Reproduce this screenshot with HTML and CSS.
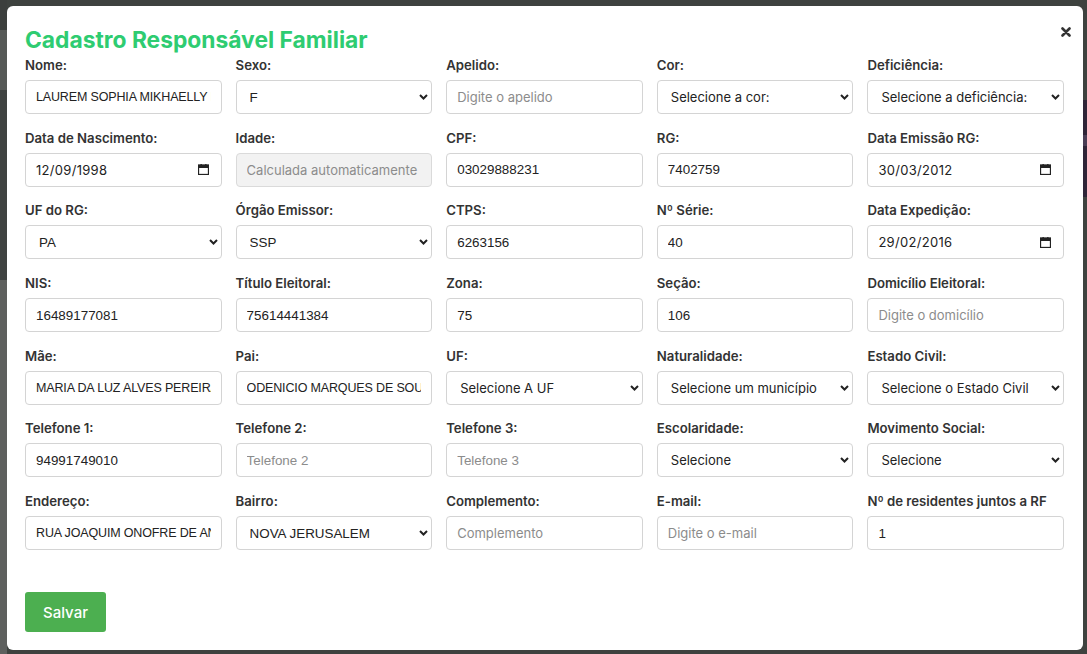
FILE: index.html
```html
<!DOCTYPE html>
<html lang="pt-BR">
<head>
<meta charset="utf-8">
<title>Cadastro Responsável Familiar</title>
<link rel="stylesheet" href="styles.css">
</head>
<body>
<div class="backdrop">
  <div class="modal">
    <div class="modal-header">
      <h2 class="title">Cadastro Responsável Familiar</h2>
      <button class="close" type="button" aria-label="Fechar">
        <svg width="10" height="10" viewBox="0 0 10 10"><path d="M1.5 1.5 L8.5 8.5 M8.5 1.5 L1.5 8.5" stroke="#333" stroke-width="2.6" stroke-linecap="round"/></svg>
      </button>
    </div>
    <form class="form-grid">
      <div class="field"><label>Nome:</label><input class="control alt upper" type="text" value="LAUREM SOPHIA MIKHAELLY PEREIRA"></div>
      <div class="field"><label>Sexo:</label><div class="select-wrap"><select class="control alt"><option>F</option></select><svg class="chev" width="9" height="6" viewBox="0 0 9 6"><path d="M1 1 L4.5 4.5 L8 1" fill="none" stroke="#222" stroke-width="2"/></svg></div></div>
      <div class="field"><label>Apelido:</label><input class="control" type="text" placeholder="Digite o apelido"></div>
      <div class="field"><label>Cor:</label><div class="select-wrap"><select class="control"><option>Selecione a cor:</option></select><svg class="chev" width="9" height="6" viewBox="0 0 9 6"><path d="M1 1 L4.5 4.5 L8 1" fill="none" stroke="#222" stroke-width="2"/></svg></div></div>
      <div class="field"><label>Deficiência:</label><div class="select-wrap"><select class="control"><option>Selecione a deficiência:</option></select><svg class="chev" width="9" height="6" viewBox="0 0 9 6"><path d="M1 1 L4.5 4.5 L8 1" fill="none" stroke="#222" stroke-width="2"/></svg></div></div>

      <div class="field"><label>Data de Nascimento:</label><div class="date-box control"><input class="date-input" type="text" value="12/09/1998"><svg class="cal" width="11" height="11" viewBox="0 0 11 11"><rect x="0.5" y="1" width="10" height="9.5" fill="none" stroke="#222" stroke-width="1.3"/><rect x="0.5" y="1" width="10" height="3" fill="#222"/><rect x="2.5" y="0" width="1.3" height="2" fill="#222"/><rect x="7.2" y="0" width="1.3" height="2" fill="#222"/></svg></div></div>
      <div class="field"><label>Idade:</label><input class="control" type="text" placeholder="Calculada automaticamente" disabled></div>
      <div class="field"><label>CPF:</label><input class="control alt" type="text" value="03029888231"></div>
      <div class="field"><label>RG:</label><input class="control alt" type="text" value="7402759"></div>
      <div class="field"><label>Data Emissão RG:</label><div class="date-box control"><input class="date-input" type="text" value="30/03/2012"><svg class="cal" width="11" height="11" viewBox="0 0 11 11"><rect x="0.5" y="1" width="10" height="9.5" fill="none" stroke="#222" stroke-width="1.3"/><rect x="0.5" y="1" width="10" height="3" fill="#222"/><rect x="2.5" y="0" width="1.3" height="2" fill="#222"/><rect x="7.2" y="0" width="1.3" height="2" fill="#222"/></svg></div></div>

      <div class="field"><label>UF do RG:</label><div class="select-wrap"><select class="control alt"><option>PA</option></select><svg class="chev" width="9" height="6" viewBox="0 0 9 6"><path d="M1 1 L4.5 4.5 L8 1" fill="none" stroke="#222" stroke-width="2"/></svg></div></div>
      <div class="field"><label>Órgão Emissor:</label><div class="select-wrap"><select class="control alt"><option>SSP</option></select><svg class="chev" width="9" height="6" viewBox="0 0 9 6"><path d="M1 1 L4.5 4.5 L8 1" fill="none" stroke="#222" stroke-width="2"/></svg></div></div>
      <div class="field"><label>CTPS:</label><input class="control alt" type="text" value="6263156"></div>
      <div class="field"><label>Nº Série:</label><input class="control alt" type="text" value="40"></div>
      <div class="field"><label>Data Expedição:</label><div class="date-box control"><input class="date-input" type="text" value="29/02/2016"><svg class="cal" width="11" height="11" viewBox="0 0 11 11"><rect x="0.5" y="1" width="10" height="9.5" fill="none" stroke="#222" stroke-width="1.3"/><rect x="0.5" y="1" width="10" height="3" fill="#222"/><rect x="2.5" y="0" width="1.3" height="2" fill="#222"/><rect x="7.2" y="0" width="1.3" height="2" fill="#222"/></svg></div></div>

      <div class="field"><label>NIS:</label><input class="control alt" type="text" value="16489177081"></div>
      <div class="field"><label>Título Eleitoral:</label><input class="control alt" type="text" value="75614441384"></div>
      <div class="field"><label>Zona:</label><input class="control alt" type="text" value="75"></div>
      <div class="field"><label>Seção:</label><input class="control alt" type="text" value="106"></div>
      <div class="field"><label>Domicílio Eleitoral:</label><input class="control" type="text" placeholder="Digite o domicílio"></div>

      <div class="field"><label>Mãe:</label><input class="control alt upper" type="text" value="MARIA DA LUZ ALVES PEREIRA"></div>
      <div class="field"><label>Pai:</label><input class="control alt upper" type="text" value="ODENICIO MARQUES DE SOUSA"></div>
      <div class="field"><label>UF:</label><div class="select-wrap"><select class="control"><option>Selecione A UF</option></select><svg class="chev" width="9" height="6" viewBox="0 0 9 6"><path d="M1 1 L4.5 4.5 L8 1" fill="none" stroke="#222" stroke-width="2"/></svg></div></div>
      <div class="field"><label>Naturalidade:</label><div class="select-wrap"><select class="control"><option>Selecione um município</option></select><svg class="chev" width="9" height="6" viewBox="0 0 9 6"><path d="M1 1 L4.5 4.5 L8 1" fill="none" stroke="#222" stroke-width="2"/></svg></div></div>
      <div class="field"><label>Estado Civil:</label><div class="select-wrap"><select class="control"><option>Selecione o Estado Civil</option></select><svg class="chev" width="9" height="6" viewBox="0 0 9 6"><path d="M1 1 L4.5 4.5 L8 1" fill="none" stroke="#222" stroke-width="2"/></svg></div></div>

      <div class="field"><label>Telefone 1:</label><input class="control alt" type="text" value="94991749010"></div>
      <div class="field"><label>Telefone 2:</label><input class="control alt" type="text" placeholder="Telefone 2"></div>
      <div class="field"><label>Telefone 3:</label><input class="control alt" type="text" placeholder="Telefone 3"></div>
      <div class="field"><label>Escolaridade:</label><div class="select-wrap"><select class="control"><option>Selecione</option></select><svg class="chev" width="9" height="6" viewBox="0 0 9 6"><path d="M1 1 L4.5 4.5 L8 1" fill="none" stroke="#222" stroke-width="2"/></svg></div></div>
      <div class="field"><label>Movimento Social:</label><div class="select-wrap"><select class="control"><option>Selecione</option></select><svg class="chev" width="9" height="6" viewBox="0 0 9 6"><path d="M1 1 L4.5 4.5 L8 1" fill="none" stroke="#222" stroke-width="2"/></svg></div></div>

      <div class="field"><label>Endereço:</label><input class="control alt upper" type="text" value="RUA JOAQUIM ONOFRE DE ANDRADE"></div>
      <div class="field"><label>Bairro:</label><div class="select-wrap"><select class="control alt"><option>NOVA JERUSALEM</option></select><svg class="chev" width="9" height="6" viewBox="0 0 9 6"><path d="M1 1 L4.5 4.5 L8 1" fill="none" stroke="#222" stroke-width="2"/></svg></div></div>
      <div class="field"><label>Complemento:</label><input class="control" type="text" placeholder="Complemento"></div>
      <div class="field"><label>E-mail:</label><input class="control" type="text" placeholder="Digite o e-mail"></div>
      <div class="field"><label>Nº de residentes juntos a RF</label><input class="control alt" type="text" value="1"></div>
    </form>
    <div class="actions">
      <button class="btn-save" type="button">Salvar</button>
    </div>
  </div>
</div>
</body>
</html>
```
FILE: styles.css
```css
* { box-sizing: border-box; }

html, body {
  margin: 0;
  height: 100%;
}

body {
  background:
    linear-gradient(to bottom, transparent 100px, #2f2538 100px, #2f2538 135px, #4a3d55 135px, #4a3d55 146px, #2f2538 146px, #2f2538 197px, transparent 197px) right top / 5px 100% no-repeat,
    linear-gradient(to bottom, #3c3f3d 0, #3c3f3d 30px, #565957 30px, #565957 90px, #3f4341 90px, #3f4341 280px, #5e605e 280px) left top / 7px 100% no-repeat,
    #3e423f;
  font-family: "Inter", "DejaVu Sans", sans-serif;
  color: #333;
}

.backdrop {
  padding: 6px 4px 4px 7px;
}

.modal {
  width: 1076px;
  height: 644px;
  background: #fff;
  border-radius: 6px;
  padding: 19px 19px 18px 18px;
  display: flex;
  flex-direction: column;
}

.modal-header {
  display: flex;
  justify-content: space-between;
  align-items: flex-start;
  margin-bottom: 2px;
}

.title {
  margin: 0;
  font-size: 22.8px;
  line-height: 30px;
  font-weight: 700;
  color: #2ecc71;
}

.close {
  border: 0;
  background: none;
  padding: 0;
  margin: 2px -7px 0 0;
  width: 10px;
  height: 10px;
  display: flex;
  cursor: pointer;
}

.form-grid {
  display: grid;
  grid-template-columns: repeat(5, 1fr);
  column-gap: 14px;
  row-gap: 15.7px;
  margin: 0;
}

.field {
  display: flex;
  flex-direction: column;
  min-width: 0;
}

.field label {
  font-size: 13.2px;
  line-height: 17px;
  font-weight: 600;
  color: #333;
  margin-bottom: 6px;
  white-space: nowrap;
}

.control {
  width: 100%;
  height: 34px;
  border: 1px solid #d4d4d4;
  border-radius: 4px;
  background: #fff;
  padding: 0 10px;
  font-family: "Inter", "DejaVu Sans", sans-serif;
  font-size: 13px;
  color: #222;
  outline: none;
}

.control.alt {
  font-family: "Liberation Sans", Arial, sans-serif;
  font-size: 13.4px;
}

.control.upper {
  font-size: 12.5px;
  letter-spacing: -0.15px;
}

.control::placeholder {
  color: #8c8c8c;
}

.control:disabled {
  background: #f2f2f2;
  border-color: #dadada;
}

.select-wrap {
  position: relative;
}

.select-wrap select {
  appearance: none;
  -webkit-appearance: none;
  padding-left: 13px;
  padding-right: 24px;
}

.chev {
  position: absolute;
  right: 4px;
  top: 14px;
  pointer-events: none;
}

.date-box {
  display: flex;
  align-items: center;
  padding-right: 12px;
}

.date-input {
  flex: 1;
  min-width: 0;
  border: 0;
  padding: 0;
  background: transparent;
  font-family: inherit;
  font-size: 13px;
  color: #222;
  outline: none;
  letter-spacing: 0.3px;
}

.cal {
  flex: none;
}

.actions {
  margin-top: auto;
  display: flex;
}

.btn-save {
  width: 81px;
  height: 40px;
  border: 0;
  border-radius: 3px;
  background: #4caf50;
  color: #fff;
  font-family: "Inter", "DejaVu Sans", sans-serif;
  font-size: 15px;
  font-weight: 500;
  cursor: pointer;
}
```
